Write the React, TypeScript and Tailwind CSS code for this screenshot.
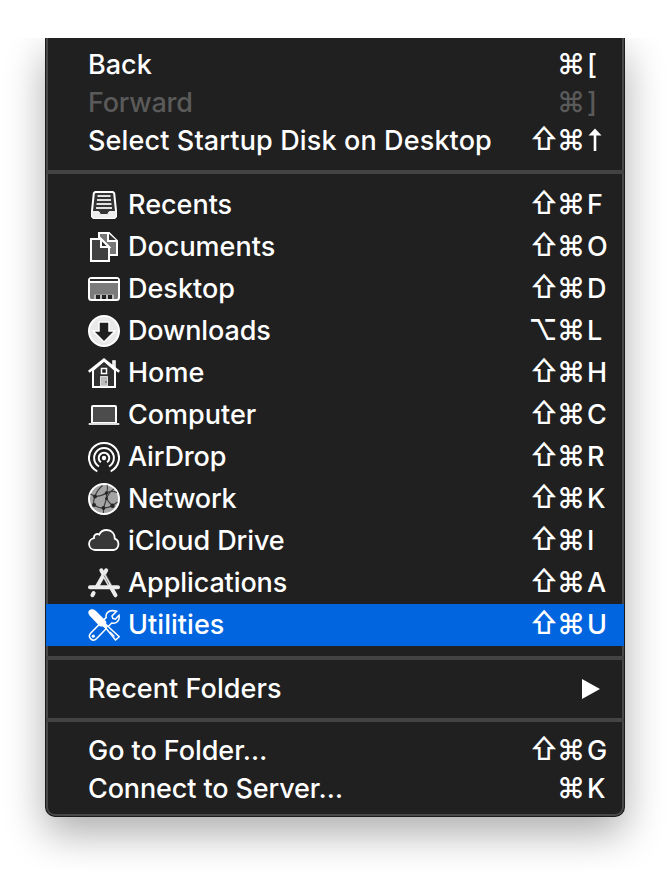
import React from "react";

type IconProps = { children: React.ReactNode };

function Glyph({ children }: IconProps) {
  return (
    <svg viewBox="0 0 32 32" className="mr-2 h-8 w-8 shrink-0" fill="none" stroke="white" strokeWidth="2">
      {children}
    </svg>
  );
}

const RecentsIcon = () => (
  <Glyph>
    <path d="M7.200 3h17.600l1.400 1.300L28 22v5.500L26.500 29h-21L4 27.500V22L5.800 4.300z" fill="#333" />
    <path d="M9.500 7h13M9 11h14M8.500 15h15M8 19h16" stroke="#e0e0e0" />
    <path d="M4.500 22.500h6.300l1.700 3h7l1.700-3h6.300v5.200l-1 .8h-21l-1-.8z" fill="#eee" stroke="#eee" strokeWidth="1" />
  </Glyph>
);

const DocumentsIcon = () => (
  <Glyph>
    <path d="M11 2h10l8 8v14H11z" fill="#777" />
    <path d="M20 2v8h9" fill="#333" />
    <path d="M3 8h10l8 8v14H3z" fill="#414141" />
    <path d="M13 8v8h8z" fill="#292929" />
  </Glyph>
);

const DesktopIcon = () => (
  <Glyph>
    <rect x="1" y="5" width="30" height="22" rx="2.500" fill="#7b7b7b" />
    <path d="M2 7h28" stroke="#292929" />
    <path d="M2 9h28" />
    <path d="M6 21.500h20V26H6z" fill="#bbb" stroke="none" />
    <path d="M8 22h4v4H8zM14 22h4v4h-4zM20 22h4v4h-4z" fill="#222" stroke="none" />
  </Glyph>
);

const DownloadsIcon = () => (
  <Glyph>
    <circle cx="16" cy="16" r="15" fill="#e9e9e9" />
    <path d="M11 7h10v9h6L16 27 5 16h6z" fill="#202020" strokeWidth="1.500" />
  </Glyph>
);

const HomeIcon = () => (
  <Glyph>
    <path d="M25 11V4h2v9" fill="#aaa" strokeWidth="1.500" />
    <path d="M5 13v17h22V13L16 3.500z" fill="#303030" />
    <path d="M.8 14.700 16 2.700l15.200 12" strokeWidth="2.600" />
    <path d="M13.500 11.500h5v5h-5z" fill="#202020" strokeWidth="1.500" />
    <path d="M12.500 19.500h7V29h-7z" fill="#bbb" stroke="#ddd" strokeWidth="1" />
    <path d="M18 24v2" stroke="#444" strokeWidth="1" />
  </Glyph>
);

const ComputerIcon = () => (
  <Glyph>
    <path d="M4 24V8q0-1 1-1h22q1 0 1 1v16z" fill="#4c4c4c" />
    <path d="M.7 25h30.600" stroke="#ddd" />
  </Glyph>
);

const AirDropIcon = () => (
  <Glyph>
    <circle cx="16" cy="17" r="2.200" fill="white" stroke="none" />
    <path d="M12.900 21.300a5.300 5.300 0 1 1 6.200 0" />
    <path d="M11 25.500a9.900 9.900 0 1 1 10 0" />
    <path d="M9.300 30.300a15 15 0 1 1 13.400 0" />
  </Glyph>
);

const NetworkIcon = () => (
  <Glyph>
    <circle cx="16" cy="16" r="15" fill="#a4a4a4" />
    <g stroke="#3a3a3a" strokeWidth="1.100">
      <path d="M2.500 11 7 13.500q7-.5 11.500-3.500T29 9.500M7 13.500Q9 7 14.500 2.500M7 13.500q-2 4-1 8.500 4 3 9.500 3 5 0 9-2.500l5-3.500M18.500 10q1.500-4 .5-8M18.500 15.500Q21 9 26 6M18.500 10v5.500q-1.500 5-3 9.500V30M18.500 15.500q2.500 4.500 6 7" />
    </g>
    <g fill="#262626" stroke="none">
      <circle cx="7" cy="13.500" r="2" />
      <circle cx="18.500" cy="10" r="1.800" />
      <circle cx="18.500" cy="15.500" r="1.500" />
      <circle cx="6" cy="22" r="2" />
      <circle cx="15.500" cy="25" r="1.900" />
      <circle cx="24.500" cy="22.800" r="2.200" />
    </g>
  </Glyph>
);

const CloudIcon = () => (
  <Glyph>
    <path d="M7 25a6 6 0 0 1-1-11.900C5.500 10 8.700 8 11.200 9.600 12.500 6.500 15.500 5 18.700 5c5 0 8.300 3.800 8 8.700A5.900 5.900 0 0 1 25.500 25z" fill="#383838" strokeWidth="1.800" />
  </Glyph>
);

const ApplicationsIcon = () => (
  <Glyph>
    <g stroke="#ececec" strokeLinecap="round" strokeWidth="4">
      <path d="M2 20.300h28" />
      <path d="M18.200 3.300 8.800 20" />
      <path d="m13.300 3.300 14.200 25" />
      <path d="m5.600 26-1.200 2.200" />
    </g>
    <path d="m17.800 7.500 6.200 11M21 17.500l-5-9" stroke="#222" strokeWidth=".5" />
  </Glyph>
);

const UtilitiesIcon = () => (
  <Glyph>
    <path
      d="M28.600 2.300 24 7l.8 2.500 2.600.7L31 6.300c1.200 5-2.700 8.800-7.300 7.800L8.400 29.800c-3.700 3.700-9.300-1.700-5.800-5.600L18.200 8.400C17 3.600 22 .2 28.600 2.300z"
      fill="#0065df"
      strokeWidth="1.500"
    />
    <circle cx="5.300" cy="27.200" r="1.600" fill="white" stroke="none" />
    <path d="m17 18 10.500 13 3.700-3.300L19 16.500z" fill="#0065df" strokeWidth="1.500" />
    <path d="M1 1.500C3-.5 6 .2 8 2l9.200 9.300c1.600 1.600 1 3 .9 3.300l2.200 2.800-2.600 2.400-3-2.400c-2 .2-3 .1-4.200-1.400L1.500 6.500C.2 4.800-.2 3 1 1.500z" fill="white" stroke="none" />
    <path d="m22 23 4.500 4.500" strokeWidth="1.200" />
  </Glyph>
);

const UpArrow = () => (
  <svg viewBox="0 0 14 24" className="ml-px h-6 w-3.5" fill="white">
    <path d="M7 1.500 13.500 8.500H8.300V24H5.700V8.500H.5z" />
  </svg>
);

type Item = {
  label: string;
  keys: string;
  track?: string;
  icon?: () => React.ReactElement;
  disabled?: boolean;
  active?: boolean;
};

const navigation: Item[] = [
  { label: "Back", keys: "⌘[" },
  { label: "Forward", keys: "⌘]", disabled: true, track: "tracking-[-0.2px]" },
  { label: "Select Startup Disk on Desktop", keys: "⇧⌘↑", track: "tracking-[0.13px]" },
];

const places: Item[] = [
  { label: "Recents", keys: "⇧⌘F", icon: RecentsIcon },
  { label: "Documents", keys: "⇧⌘O", icon: DocumentsIcon },
  { label: "Desktop", keys: "⇧⌘D", icon: DesktopIcon },
  { label: "Downloads", keys: "⌥⌘L", icon: DownloadsIcon, track: "tracking-[-0.15px]" },
  { label: "Home", keys: "⇧⌘H", icon: HomeIcon },
  { label: "Computer", keys: "⇧⌘C", icon: ComputerIcon },
  { label: "AirDrop", keys: "⇧⌘R", icon: AirDropIcon, track: "tracking-[-0.15px]" },
  { label: "Network", keys: "⇧⌘K", icon: NetworkIcon, track: "tracking-[-0.25px]" },
  { label: "iCloud Drive", keys: "⇧⌘I", icon: CloudIcon, track: "tracking-[-0.1px]" },
  { label: "Applications", keys: "⇧⌘A", icon: ApplicationsIcon, track: "tracking-[-0.1px]" },
  { label: "Utilities", keys: "⇧⌘U", icon: UtilitiesIcon, active: true, track: "tracking-[0.05px]" },
];

const actions: Item[] = [
  { label: "Go to Folder…", keys: "⇧⌘G", track: "tracking-[-0.05px]" },
  { label: "Connect to Server…", keys: "⌘K", track: "tracking-[-0.13px]" },
];

function Keys({ keys }: { keys: string }) {
  const chars = Array.from(keys);
  const last = chars.pop();
  return (
    <span className="ml-auto flex pb-0.5">
      {chars.map((c) => (
        <span
          key={c}
          className={`flex w-7 justify-center ${c === "⇧" ? "origin-[50%_85%] scale-y-[1.14]" : "-translate-x-px scale-105"}`}
        >
          {c}
        </span>
      ))}
      <span className="w-[38px] pl-px">{last === "↑" ? <UpArrow /> : last}</span>
    </span>
  );
}

function Row({ item }: { item: Item }) {
  const Icon = item.icon;
  return (
    <div
      className={`flex items-center pl-[42px] ${Icon ? "h-[42px]" : "h-[38px]"} ${item.active ? "bg-[#0065df]" : ""} ${item.disabled ? "text-[#5a5a5a]" : ""}`}
    >
      {Icon && <Icon />}
      <span className={`pb-0.5 ${item.track ?? ""}`}>{item.label}</span>
      <Keys keys={item.keys} />
    </div>
  );
}

const Separator = () => (
  <div className="flex h-6 items-center">
    <div className="h-1 w-full bg-[#434343]" />
  </div>
);

export default function App() {
  return (
    <div className="h-[870px] w-[670px] bg-white pt-[38px]">
      <div className="h-[832px] overflow-hidden px-[45px]">
        <div className="h-[779px] rounded-b-[10px] shadow-[0_16px_40px_rgba(0,0,0,0.33)]">
          <div className="h-full whitespace-nowrap rounded-b-[10px] border-x border-b border-[#1a1a1a] bg-[#202020] pt-2 font-['Inter',sans-serif] text-[27px] leading-none font-medium text-white shadow-[inset_2px_0_#484848,inset_-2px_0_#484848,inset_0_-2px_#484848]">
            {navigation.map((i) => (
              <Row key={i.label} item={i} />
            ))}
            <Separator />
            {places.map((i) => (
              <Row key={i.label} item={i} />
            ))}
            <Separator />
            <div className="flex h-[38px] items-center pl-[42px]">
              <span className="pb-0.5 tracking-[0.07px]">Recent Folders</span>
              <svg viewBox="0 0 18 20" className="mr-6 ml-auto h-5 w-[18px]">
                <path d="M0 0v20l18-10z" fill="white" />
              </svg>
            </div>
            <Separator />
            {actions.map((i) => (
              <Row key={i.label} item={i} />
            ))}
          </div>
        </div>
      </div>
    </div>
  );
}
